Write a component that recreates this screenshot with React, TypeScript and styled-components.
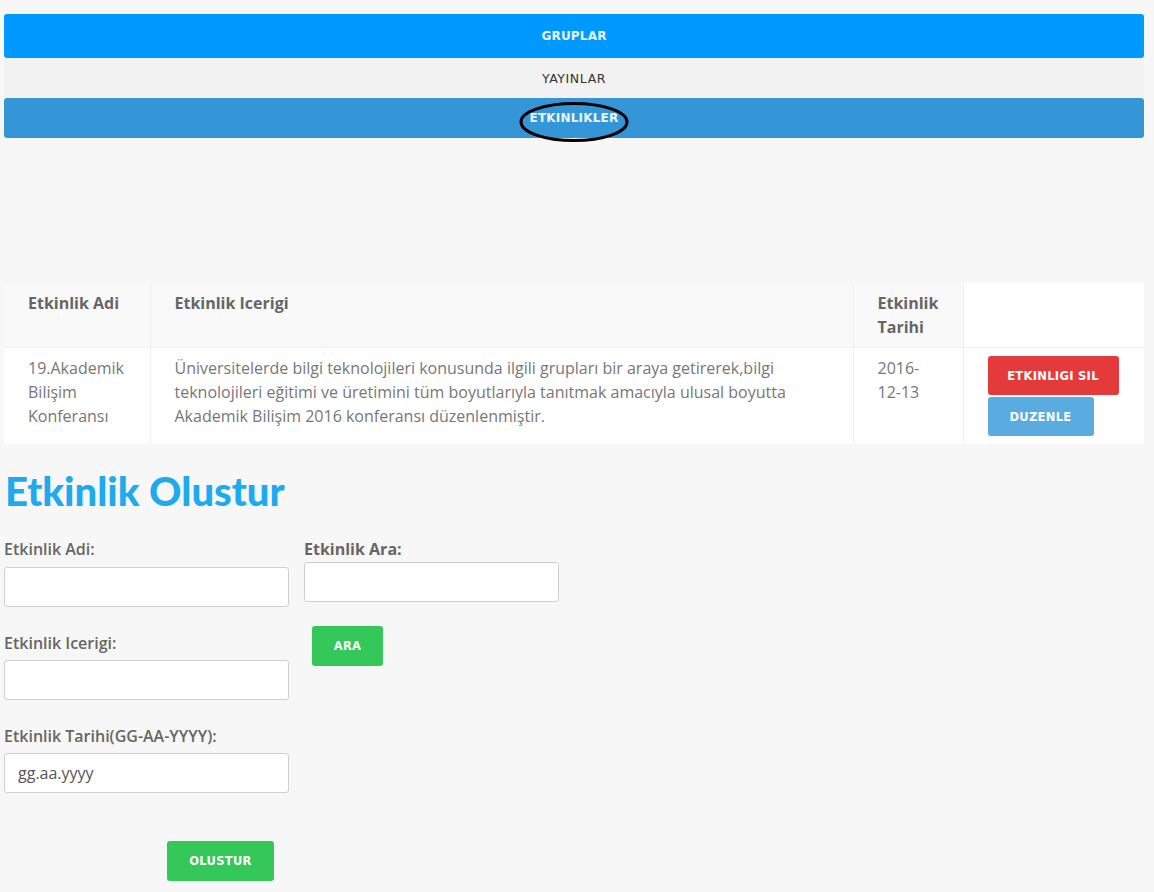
import React from "react";
import styled, { createGlobalStyle } from "styled-components";

const GlobalStyle = createGlobalStyle`
  html, body { margin: 0; padding: 0; background: #f7f7f7; }
  body { font-family: "Open Sans", "Liberation Sans", sans-serif; color: #666; }
  * { box-sizing: border-box; }
`;

const Page = styled.div`
  width: 1140px;
  margin-left: 4px;
  padding-top: 14px;
  padding-bottom: 11px;
`;

const Nav = styled.nav`
  display: flex;
  flex-direction: column;
`;

const NavItem = styled.div<{ $bg: string; $color: string; $h: number; $bold?: boolean; $round?: boolean }>`
  position: relative;
  height: ${(p) => p.$h}px;
  display: flex;
  align-items: center;
  justify-content: center;
  background: ${(p) => p.$bg};
  color: ${(p) => p.$color};
  border-radius: ${(p) => (p.$round ? "3px" : "0")};
  font-family: "DejaVu Sans", "Liberation Sans", sans-serif;
  font-size: ${(p) => (p.$bold ? "12px" : "12.5px")};
  font-weight: ${(p) => (p.$bold ? 700 : 400)};
  letter-spacing: ${(p) => (p.$bold ? "0.2px" : "0.6px")};
`;

const Ellipse = styled.svg`
  position: absolute;
  left: 514px;
  top: 4px;
  overflow: visible;
  pointer-events: none;
`;

const Table = styled.table`
  margin-top: 145px;
  width: 1140px;
  border-collapse: collapse;
  table-layout: fixed;
  font-size: 16px;
  line-height: 24px;
`;

const Th = styled.th<{ $white?: boolean }>`
  text-align: left;
  vertical-align: top;
  font-weight: 700;
  color: #666;
  background: ${(p) => (p.$white ? "#ffffff" : "#f9f9f9")};
  padding: 8px 25px 8px 24px;
  border-left: 1px solid #f0f0f0;
  border-bottom: 1px solid #f0f0f0;
  &:first-child { border-left: none; }
`;

const Td = styled.td`
  vertical-align: top;
  color: #777;
  background: #ffffff;
  padding: 8px 25px 8px 24px;
  border-left: 1px solid #f0f0f0;
  &:first-child { border-left: none; }
`;

const ButtonStack = styled.div`
  display: flex;
  flex-direction: column;
  align-items: flex-start;
  gap: 2px;
`;

const ActionButton = styled.button<{ $bg: string; $w: number }>`
  width: ${(p) => p.$w}px;
  height: 39px;
  border: none;
  border-radius: 3px;
  background: ${(p) => p.$bg};
  color: #ffffff;
  font-family: "DejaVu Sans", "Liberation Sans", sans-serif;
  font-weight: 700;
  font-size: 11.5px;
  letter-spacing: 0.3px;
  padding: 0;
  display: flex;
  align-items: center;
  justify-content: center;
`;

const Title = styled.h1`
  margin: 27px 0 0 1px;
  font-family: "Lato", "Open Sans", sans-serif;
  font-weight: 900;
  font-size: 40px;
  line-height: 40px;
  color: #1eaaee;
`;

const Form = styled.div`
  display: flex;
  gap: 15px;
  margin-top: 26px;
`;

const Column = styled.div<{ $w: number }>`
  width: ${(p) => p.$w}px;
  display: flex;
  flex-direction: column;
`;

const Label = styled.label<{ $bold?: boolean; $gap: number }>`
  display: block;
  font-size: 16px;
  line-height: 24px;
  font-weight: ${(p) => (p.$bold ? 700 : 600)};
  color: #666;
  margin-bottom: ${(p) => p.$gap}px;
`;

const Input = styled.input`
  width: 100%;
  height: 40px;
  border: 1px solid #cfcfcf;
  border-radius: 3px;
  background: #ffffff;
  font-family: "Open Sans", "Liberation Sans", sans-serif;
  font-size: 16px;
  color: #555;
  padding: 0 13px;
  margin-bottom: 24px;
  outline: none;
`;

const GreenButton = styled.button<{ $w: number; $ml: number; $mt: number }>`
  width: ${(p) => p.$w}px;
  height: 40px;
  margin-left: ${(p) => p.$ml}px;
  margin-top: ${(p) => p.$mt}px;
  border: none;
  border-radius: 3px;
  background: #34c759;
  color: #ffffff;
  font-family: "DejaVu Sans", "Liberation Sans", sans-serif;
  font-weight: 700;
  font-size: 11.5px;
  letter-spacing: 0.3px;
  padding: 0;
`;

export default function App() {
  return (
    <>
      <GlobalStyle />
      <Page>
        <Nav>
          <NavItem $bg="#0099ff" $color="#e6f4ff" $h={44} $bold $round>GRUPLAR</NavItem>
          <NavItem $bg="#f2f2f2" $color="#333333" $h={40}>YAYINLAR</NavItem>
          <NavItem $bg="#3596d7" $color="#eaf5fc" $h={40} $bold $round>
            ETKINLIKLER
            <Ellipse width="112" height="42" viewBox="0 0 112 42">
              <ellipse cx="56" cy="20" rx="53" ry="18.5" fill="none" stroke="#000" strokeWidth="3" />
            </Ellipse>
          </NavItem>
        </Nav>

        <Table>
          <colgroup>
            <col style={{ width: 146 }} />
            <col style={{ width: 703 }} />
            <col style={{ width: 110 }} />
            <col style={{ width: 181 }} />
          </colgroup>
          <thead>
            <tr>
              <Th>Etkinlik Adi</Th>
              <Th>Etkinlik Icerigi</Th>
              <Th>Etkinlik Tarihi</Th>
              <Th $white></Th>
            </tr>
          </thead>
          <tbody>
            <tr>
              <Td>19.Akademik Bilişim Konferansı</Td>
              <Td>
                Üniversitelerde bilgi teknolojileri konusunda ilgili grupları bir araya getirerek,bilgi teknolojileri eğitimi ve üretimini tüm boyutlarıyla tanıtmak amacıyla ulusal boyutta Akademik Bilişim 2016 konferansı düzenlenmiştir.
              </Td>
              <Td>2016-12-13</Td>
              <Td>
                <ButtonStack>
                  <ActionButton $bg="#e53a3c" $w={131}>ETKINLIGI SIL</ActionButton>
                  <ActionButton $bg="#5aace0" $w={106}>DUZENLE</ActionButton>
                </ButtonStack>
              </Td>
            </tr>
          </tbody>
        </Table>

        <Title>Etkinlik Olustur</Title>

        <Form>
          <Column $w={285}>
            <Label $gap={6}>Etkinlik Adi:</Label>
            <Input />
            <Label $gap={5}>Etkinlik Icerigi:</Label>
            <Input />
            <Label $gap={5}>Etkinlik Tarihi(GG-AA-YYYY):</Label>
            <Input defaultValue="gg.aa.yyyy" />
            <GreenButton $w={107} $ml={163} $mt={24}>OLUSTUR</GreenButton>
          </Column>
          <Column $w={255}>
            <Label $bold $gap={1}>Etkinlik Ara:</Label>
            <Input />
            <GreenButton $w={71} $ml={8} $mt={0}>ARA</GreenButton>
          </Column>
        </Form>
      </Page>
    </>
  );
}
